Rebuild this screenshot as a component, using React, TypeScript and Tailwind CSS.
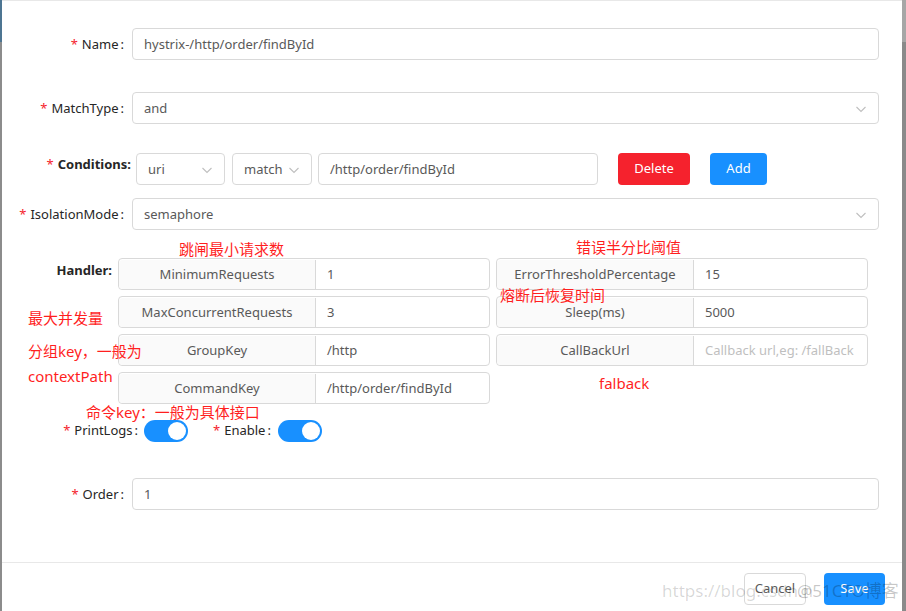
import React from "react";

const FONT = '"Noto Sans", "Noto Sans CJK SC", sans-serif';

function Chevron() {
  return (
    <svg width="12" height="12" viewBox="0 0 12 12" fill="none">
      <path d="M1.5 4 L6 8.5 L10.5 4" stroke="#bfbfbf" strokeWidth="1.1" />
    </svg>
  );
}

function Label({ text, w }: { text: string; w: string }) {
  return (
    <div className={`${w} flex justify-end items-center h-[32px] shrink-0 text-[13px] text-[#262626] pt-[1px]`}>
      <span className="text-[#f5222d] mr-[4px]">*</span>
      <span>{text}</span>
      <span className="ml-[2px] mr-[8px]">:</span>
    </div>
  );
}

function TextBox({ value, select }: { value: string; select?: boolean }) {
  return (
    <div className="flex-1 h-[32px] border border-[#d9d9d9] rounded-[4px] flex items-center pl-[11px] pr-[11px] pt-[1px] text-[13px] text-[#595959]">
      <span className="flex-1">{value}</span>
      {select && <Chevron />}
    </div>
  );
}

function Switch() {
  return (
    <div className="relative w-[44px] h-[22px] rounded-full bg-[#1890ff] shrink-0">
      <div className="absolute left-[24px] top-[2px] w-[18px] h-[18px] rounded-full bg-white" />
    </div>
  );
}

function AddonField({ addon, value, placeholder }: { addon: string; value?: string; placeholder?: string }) {
  return (
    <div className="flex h-[32px] border border-[#d9d9d9] rounded-[4px] text-[13px] pt-[1px]">
      <div className="w-[197px] bg-[#fafafa] border-r border-[#d9d9d9] flex items-center justify-center text-[#595959] rounded-l-[4px]">
        {addon}
      </div>
      <div className={`flex-1 flex items-center pl-[11px] ${placeholder ? "text-[#bfbfbf]" : "text-[#595959]"} whitespace-nowrap overflow-hidden`}>
        {value ?? placeholder}
      </div>
    </div>
  );
}

const notes: { t: string; x: number; y: number }[] = [
  { t: "跳闸最小请求数", x: 179, y: 239 },
  { t: "错误半分比阈值", x: 576, y: 237 },
  { t: "熔断后恢复时间", x: 500, y: 285 },
  { t: "最大并发量", x: 28, y: 308 },
  { t: "分组key，一般为", x: 28, y: 341 },
  { t: "contextPath", x: 28, y: 366 },
  { t: "falback", x: 599, y: 373 },
  { t: "命令key：一般为具体接口", x: 86, y: 402 },
];

export default function App() {
  return (
    <div className="w-[906px] h-[611px] bg-white flex overflow-hidden" style={{ fontFamily: FONT }}>
      <div className="w-[2px] shrink-0 flex flex-col">
        <div className="h-[42px] bg-[#4d7592]" />
        <div className="flex-1 bg-[#8c8c8c]" />
      </div>
      <div className="relative flex-1 flex flex-col border-t border-[#e8e8e8]">
        <div className="flex flex-col pt-[27px] pr-[23px]">
          {/* Name */}
          <div className="flex">
            <Label text="Name" w="w-[130px]" />
            <TextBox value="hystrix-/http/order/findById" />
          </div>
          {/* MatchType */}
          <div className="flex mt-[32px]">
            <Label text="MatchType" w="w-[130px]" />
            <TextBox value="and" select />
          </div>
          {/* Conditions */}
          <div className="flex mt-[29px] items-start">
            <div className="w-[134px] shrink-0 flex justify-end pr-[5px] leading-[22px] text-[13px] font-bold text-[#262626]">
              <span className="text-[#f5222d] mr-[4px] font-normal">*</span>
              Conditions:
            </div>
            <div className="w-[89px] h-[32px] border border-[#d9d9d9] rounded-[4px] flex items-center pl-[11px] pr-[11px] pt-[1px] text-[13px] text-[#595959]">
              <span className="flex-1">uri</span>
              <Chevron />
            </div>
            <div className="ml-[7px] w-[80px] h-[32px] border border-[#d9d9d9] rounded-[4px] flex items-center pl-[11px] pr-[11px] pt-[1px] text-[13px] text-[#595959]">
              <span className="flex-1">match</span>
              <Chevron />
            </div>
            <div className="ml-[6px] w-[280px] h-[32px] border border-[#d9d9d9] rounded-[4px] flex items-center pl-[11px] pt-[1px] text-[13px] text-[#595959]">
              /http/order/findById
            </div>
            <button className="ml-[20px] w-[72px] h-[32px] rounded-[4px] bg-[#f5222d] text-white text-[13px]">Delete</button>
            <button className="ml-[20px] w-[57px] h-[32px] rounded-[4px] bg-[#1890ff] text-white text-[13px]">Add</button>
          </div>
          {/* IsolationMode */}
          <div className="flex mt-[13px]">
            <Label text="IsolationMode" w="w-[130px]" />
            <TextBox value="semaphore" select />
          </div>
          {/* Handler */}
          <div className="flex mt-[28px] items-start">
            <div className="w-[116px] shrink-0 flex justify-end pr-[6px] pt-[1px] leading-[22px] text-[13px] font-bold text-[#262626]">
              Handler:
            </div>
            <div className="grid grid-cols-2 gap-x-[6px] gap-y-[6px] w-[750px]">
              <AddonField addon="MinimumRequests" value="1" />
              <AddonField addon="ErrorThresholdPercentage" value="15" />
              <AddonField addon="MaxConcurrentRequests" value="3" />
              <AddonField addon="Sleep(ms)" value="5000" />
              <AddonField addon="GroupKey" value="/http" />
              <AddonField addon="CallBackUrl" placeholder="Callback url,eg: /fallBack" />
              <AddonField addon="CommandKey" value="/http/order/findById" />
            </div>
          </div>
          {/* Switches */}
          <div className="flex items-center mt-[16px] h-[22px] text-[13px] text-[#262626]">
            <div className="w-[142px] flex justify-end items-center">
              <span className="text-[#f5222d] mr-[4px]">*</span>
              <span>PrintLogs</span>
              <span className="ml-[2px] mr-[6px]">:</span>
            </div>
            <Switch />
            <div className="ml-[25px] flex items-center">
              <span className="text-[#f5222d] mr-[4px]">*</span>
              <span>Enable</span>
              <span className="ml-[2px] mr-[7px]">:</span>
            </div>
            <Switch />
          </div>
          {/* Order */}
          <div className="flex mt-[36px]">
            <Label text="Order" w="w-[130px]" />
            <TextBox value="1" />
          </div>
        </div>
        {/* Footer */}
        <div className="mt-[52px] border-t border-[#e8e8e8] flex justify-end pt-[10px] pr-[17px]">
          <button className="w-[62px] h-[32px] border border-[#d9d9d9] rounded-[4px] bg-white text-[13px] text-[#595959]">Cancel</button>
          <button className="ml-[18px] w-[61px] h-[32px] rounded-[4px] bg-[#1890ff] text-white text-[13px]">Save</button>
        </div>

        {notes.map((n) => (
          <div
            key={n.t}
            className="absolute text-[15px] leading-[20px] text-[#ff1f1f] whitespace-nowrap"
            style={{ left: n.x - 2, top: n.y - 1 }}
          >
            {n.t}
          </div>
        ))}
        <div className="absolute left-[660px] top-[579px] text-[17px] leading-[22px] text-[rgba(0,0,0,0.16)] whitespace-nowrap pointer-events-none">
          https://blog.csdn.n
        </div>
        <div className="absolute left-[795px] top-[579px] text-[17px] leading-[22px] text-[rgba(0,0,0,0.22)] whitespace-nowrap pointer-events-none">
          @51CTO博客
        </div>
      </div>
      <div className="w-[4px] shrink-0 flex flex-col">
        <div className="h-[42px] bg-[#a6a6a6]" />
        <div className="flex-1 bg-[#8a8a8a]" />
      </div>
    </div>
  );
}
